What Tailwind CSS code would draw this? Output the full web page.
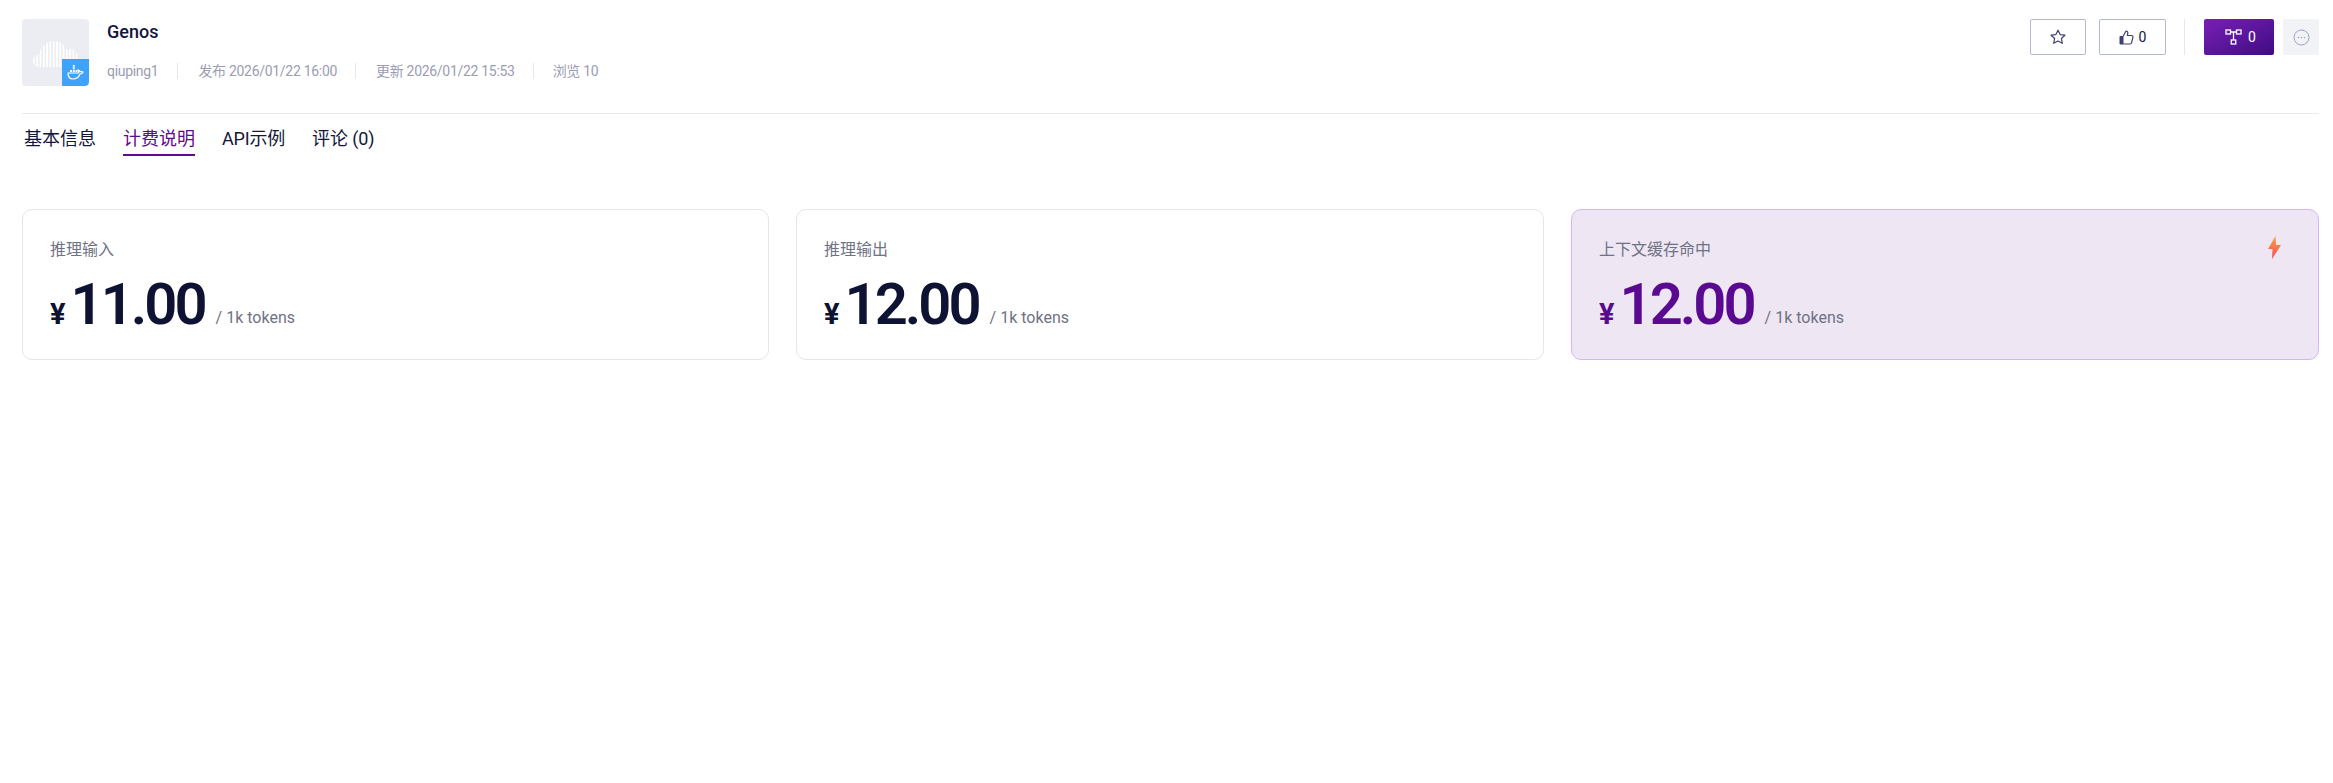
<!DOCTYPE html>
<html lang="zh-CN">
<head>
  <meta charset="UTF-8">
  <title>Genos</title>
  <script src="https://cdn.jsdelivr.net/npm/@tailwindcss/browser@4"></script>
</head>
<body class="bg-white min-h-screen font-['Roboto','Noto_Sans_CJK_SC',sans-serif] text-[#14163a]">
  <div class="pl-[22px] pr-[14px] pt-[19px]">
    <!-- header -->
    <div class="flex justify-between h-[94px] border-b border-[#e9eaf0] box-content">
      <div class="flex">
        <div class="relative w-[67px] h-[67px] rounded-[4px] bg-[#ebedf2] overflow-hidden">
          <svg class="absolute left-[11px] top-[22px]" width="46" height="27" viewBox="0 0 46 27">
            <defs>
              <pattern id="bars" width="3.3" height="27" patternUnits="userSpaceOnUse">
                <rect width="1.7" height="27" fill="#fff" />
              </pattern>
            </defs>
            <path d="M6 26C2 26 0 23 0 20c0-4 3-6 6-6 1-8 8-14 15-14 6 0 11 4 13 9 1-1 2-1 4-1 4 0 7 4 7 9 0 5-3 9-7 9Z" fill="url(#bars)" />
          </svg>
          <div class="absolute right-0 bottom-0 w-[27px] h-[27px] bg-[#3fa2fb] rounded-br-[4px] flex items-center justify-center">
            <svg width="17" height="15" viewBox="0 0 17 15" fill="none">
              <path d="M1 8h10.500c.4-1 .3-2.300-.2-3 1 .2 1.800.9 2 1.800 1-.3 2-.2 2.700.3-.6 1.300-1.600 1.900-2.900 1.900C11.800 12 9.500 14 6 14 2.800 14 1 11.500 1 8Z" stroke="#fff" stroke-width="1.200" />
              <path d="M3 5h2v2H3zM5.800 5h2v2h-2zM8.500 5h2v2h-2zM5.800 2.300h2v2h-2zM5.800 0h2v1.700h-2z" fill="#fff" />
            </svg>
          </div>
        </div>
        <div class="ml-[18px]">
          <div class="text-[18px] leading-[26px] font-medium text-[#14163a]">Genos</div>
          <div class="flex items-center mt-[13px] h-[26px] text-[14px] tracking-[-0.3px] text-[#9a9db3]">
            <span>qiuping1</span>
            <span class="w-px h-[16px] bg-[#e6e7ee] ml-[19px] mr-[20px]"></span>
            <span>发布 2026/01/22 16:00</span>
            <span class="w-px h-[16px] bg-[#e6e7ee] ml-[18px] mr-[20px]"></span>
            <span>更新 2026/01/22 15:53</span>
            <span class="w-px h-[16px] bg-[#e6e7ee] ml-[18px] mr-[19px]"></span>
            <span>浏览 10</span>
          </div>
        </div>
      </div>
      <div class="flex items-start">
        <button class="w-[56px] h-[36px] rounded-[2px] border border-[#b4b8d0] flex items-center justify-center">
          <svg width="16" height="16" viewBox="0 0 16 16" fill="none">
            <path d="M8 1.200l2.100 4.400 4.800.6-3.500 3.300.9 4.800L8 12l-4.300 2.300.9-4.800L1.100 6.200l4.800-.6Z" stroke="#3d4270" stroke-width="1.200" stroke-linejoin="round" />
          </svg>
        </button>
        <button class="ml-[13px] w-[67px] h-[36px] rounded-[2px] border border-[#b4b8d0] flex items-center justify-center gap-[5px] text-[14px] text-[#14163a]">
          <svg width="15" height="15" viewBox="0 0 15 15" fill="none">
            <path d="M1 6.500h3V14H1Z" fill="#3d4270" stroke="#3d4270" />
            <path d="M4 6.500 7 1c1.300 0 2 1 1.800 2.200L8.400 5.500h4.100c1 0 1.700.9 1.400 1.900l-1.300 5.300c-.2.8-.8 1.300-1.600 1.300H4" stroke="#3d4270" stroke-width="1.200" stroke-linejoin="round" />
          </svg>
          <span>0</span>
        </button>
        <span class="ml-[18px] w-px h-[36px] bg-[#e6e7ee]"></span>
        <button class="ml-[19px] pl-[3px] w-[70px] h-[36px] rounded-[2px] bg-gradient-to-br from-[#7a1fb5] to-[#3f0a84] flex items-center justify-center gap-[6px] text-[14px] text-white">
          <svg width="17" height="16" viewBox="0 0 17 16" fill="none" stroke="#fff" stroke-width="1.300">
            <rect x="1" y="1" width="4.500" height="4" />
            <rect x="11.500" y="1" width="4.500" height="4" />
            <rect x="6.250" y="11" width="4.500" height="4" />
            <path d="M5.500 3h6M8.500 3v8" />
          </svg>
          <span>0</span>
        </button>
        <button class="ml-[9px] w-[36px] h-[36px] rounded-[2px] bg-[#f2f3f7] flex items-center justify-center">
          <svg width="17" height="17" viewBox="0 0 17 17" fill="none">
            <circle cx="8.500" cy="8.500" r="7.500" stroke="#9aa0c6" />
            <circle cx="5.500" cy="8.500" r=".8" fill="#9aa0c6" />
            <circle cx="8.500" cy="8.500" r=".8" fill="#9aa0c6" />
            <circle cx="11.500" cy="8.500" r=".8" fill="#9aa0c6" />
          </svg>
        </button>
      </div>
    </div>

    <!-- tabs -->
    <div class="flex gap-[27px] pl-[2px] mt-[12px] text-[18px] leading-[26px]">
      <div class="h-[28px] text-[#14163a]">基本信息</div>
      <div class="h-[28px] text-[#5f0a8f] border-b-[2px] border-[#5f0a8f] box-content">计费说明</div>
      <div class="h-[28px] text-[#14163a] tracking-[-0.2px]">API示例</div>
      <div class="h-[28px] text-[#14163a] tracking-[-0.1px]">评论 (0)</div>
    </div>

    <!-- price cards -->
    <div class="grid grid-cols-[747px_748px_748px] gap-[27px] mt-[53px]">
      <div class="h-[151px] rounded-[10px] border border-[#e4e5ee] bg-white px-[27px] pt-[28px]">
        <div class="text-[16px] leading-[24px] text-[#6f7285]">推理输入</div>
        <div class="flex items-baseline mt-[9px] h-[66px]">
          <span class="text-[29px] font-bold text-[#0e1130]">¥</span>
          <span class="ml-[5px] text-[58px] leading-[66px] font-semibold tracking-[-3px] text-[#0e1233]">11.00</span>
          <span class="ml-[11px] -translate-y-px text-[16px] text-[#6f7285]">/ 1k tokens</span>
        </div>
      </div>
      <div class="h-[151px] rounded-[10px] border border-[#e4e5ee] bg-white px-[27px] pt-[28px]">
        <div class="text-[16px] leading-[24px] text-[#6f7285]">推理输出</div>
        <div class="flex items-baseline mt-[9px] h-[66px]">
          <span class="text-[29px] font-bold text-[#0e1130]">¥</span>
          <span class="ml-[5px] text-[58px] leading-[66px] font-semibold tracking-[-3px] text-[#0e1233]">12.00</span>
          <span class="ml-[11px] -translate-y-px text-[16px] text-[#6f7285]">/ 1k tokens</span>
        </div>
      </div>
      <div class="relative h-[151px] rounded-[10px] border border-[#d6b4fb] bg-[#eee6f3] px-[27px] pt-[28px]">
        <div class="text-[16px] leading-[24px] text-[#6f7285]">上下文缓存命中</div>
        <div class="flex items-baseline mt-[9px] h-[66px]">
          <span class="text-[29px] font-bold text-[#5a0a91]">¥</span>
          <span class="ml-[5px] text-[58px] leading-[66px] font-semibold tracking-[-3px] text-[#5a0a91]">12.00</span>
          <span class="ml-[11px] -translate-y-px text-[16px] text-[#6f7285]">/ 1k tokens</span>
        </div>
        <svg class="absolute right-[37px] top-[26px]" width="13" height="23" viewBox="0 0 13 23">
          <defs>
            <linearGradient id="bolt" x1="0" y1="0" x2="0" y2="1">
              <stop offset="0" stop-color="#fba23c" />
              <stop offset="1" stop-color="#f6495c" />
            </linearGradient>
          </defs>
          <path d="M7.500 0 0 13h4.500L4 23l9-14H8Z" fill="url(#bolt)" />
        </svg>
      </div>
    </div>
  </div>
</body>
</html>
